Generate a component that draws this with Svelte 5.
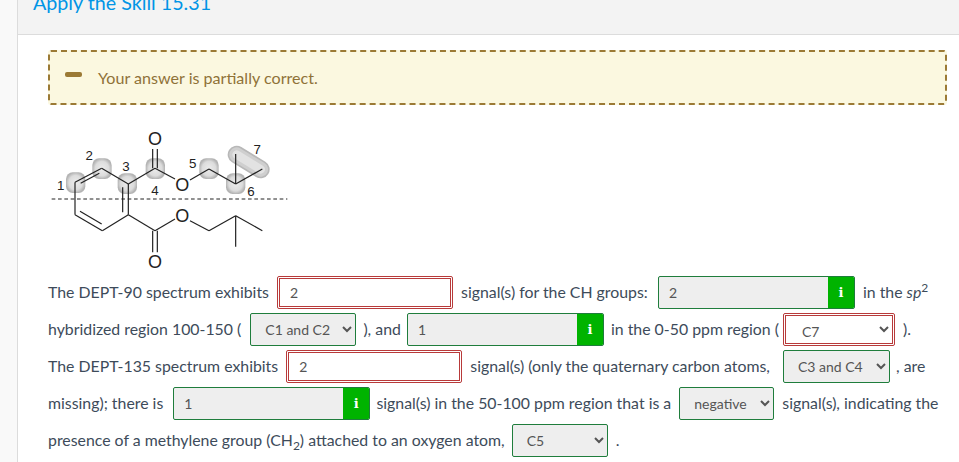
<script>
  const bonds = [
    [105,175,185,133],[185,133,265,180],[265,180,265,272],[265,272,187,320],[187,320,105,272],[105,272,105,175],
    [122,178,178,148],[248,190,248,265],[120,262,185,300],
    [265,180,345,133],[338,75,338,133],[352,75,352,133],[345,133,405,165],[450,168,507,135],[507,135,587,180],[587,180,667,135],[587,180,587,90],
    [265,272,345,320],[345,320,405,285],[450,290,507,320],[507,320,587,275],[587,275,667,320],[587,275,587,368],[338,320,338,385],[352,320,352,385]
  ];
  const blobs = [[78,145],[157,103],[233,148],[317,103],[478,103],[558,148]];
  const labels = [[62,197,'1'],[148,109,'2'],[258,142,'3'],[345,214,'4'],[458,131,'5'],[633,216,'6'],[652,89,'7']];
  const oxygens = [[345,45],[427,182],[427,275],[345,413]];
</script>

<div class="page">
  <main class="main">
    <header class="head"><h2 class="title">Apply the Skill 15.31</h2></header>
    <section class="body">
      <div class="alert"><span class="dash"></span><span>Your answer is partially correct.</span></div>

      <svg class="mol" viewBox="0 0 780 450" width="260" height="150" aria-label="Molecule">
        <defs>
          <radialGradient id="g"><stop offset="0" stop-color="#ececec"/><stop offset="0.7" stop-color="#dcdcdc"/><stop offset="1" stop-color="#b4b4b4"/></radialGradient>
        </defs>
        {#each blobs as b}<rect x={b[0]} y={b[1]} width="58" height="62" rx="20" fill="url(#g)"/>{/each}
        <g stroke-linecap="round">
          <line x1="590" y1="92" x2="662" y2="136" stroke="#b8b8b8" stroke-width="54"/>
          <line x1="590" y1="92" x2="662" y2="136" stroke="#cfcfcf" stroke-width="44"/>
          <line x1="590" y1="92" x2="662" y2="136" stroke="#e2e2e2" stroke-width="26"/>
        </g>
        <line x1="35" y1="225" x2="742" y2="225" stroke="#222" stroke-width="3" stroke-dasharray="11 8"/>
        {#each bonds as b}<line x1={b[0]} y1={b[1]} x2={b[2]} y2={b[3]} stroke="#222" stroke-width="3.6"/>{/each}
        {#each labels as l}<text x={l[0]} y={l[1]} class="num">{l[2]}</text>{/each}
        {#each oxygens as o}<text x={o[0]} y={o[1]+19} class="oxy">O</text>{/each}
      </svg>

      <div class="text first">
        The DEPT-90 spectrum exhibits
        <span class="bad inp"><input value="2" /></span>
        signal(s) for the CH groups:
        <span class="good group nudge-g1"><input value="2" /><b class="info">i</b></span>
        in the <i>sp</i><sup>2</sup>
        hybridized region 100-150 (
        <select class="good sel w106 nudge-c1"><option>C1 and C2</option></select>
        ), and
        <span class="good group nudge-g2"><input value="1" /><b class="info">i</b></span>
        in the 0-50 ppm region (
        <span class="bad badsel"><select><option>C7</option></select></span>
        ).
      </div>
      <div class="text">
        The DEPT-135 spectrum exhibits
        <span class="bad inp"><input value="2" /></span>
        signal(s) (only the quaternary carbon atoms,
        <select class="good sel w107 nudge-c3"><option>C3 and C4</option></select>
        , are
        missing); there is
        <span class="good group nudge-g3"><input value="1" /><b class="info">i</b></span>
        signal(s) in the 50-100 ppm region that is a
        <select class="good sel w95"><option>negative</option></select>
        signal(s), indicating the
        presence of a methylene group (CH<sub>2</sub>) attached to an oxygen atom,
        <select class="good sel w96 nudge-c5"><option>C5</option></select>
        .
      </div>
    </section>
  </main>
</div>

<style>
  :global(body) { margin: 0; background: #fff; overflow: hidden; }
  .page { height: 462px; overflow: hidden; padding-left: 17px; background: #f9f9f9; font-family: Lato, "Open Sans", sans-serif; box-sizing: border-box; }
  .main { height: 462px; border-left: 1px solid #dcdcdc; background: #fff; }
  .head { height: 34px; background: #f3f3f3; border-bottom: 1px solid #dcdcdc; overflow: hidden; }
  .title { margin: -11px 0 0 15px; font-size: 19.7px; font-weight: 400; line-height: 28px; color: #0095e6; }
  .body { padding: 15px 12px 0 30px; }
  .alert { display: flex; align-items: center; height: 55px; box-sizing: border-box; border: 2px dashed #9b7a35; border-radius: 3px; background: #fbf8e0; color: #8f7238; font-size: 16.1px; padding-left: 15px; }
  .dash { width: 17px; height: 5px; border-radius: 2px; background: #9b7a35; margin-right: 16px; position: relative; top: -3px; }
  .mol { display: block; margin: 19px 0 0 -8px; }
  .num { font: 40px "Liberation Sans", sans-serif; fill: #222; text-anchor: middle; }
  .oxy { font: 54px "Liberation Sans", sans-serif; fill: #222; text-anchor: middle; }
  .text { color: #3d4b5a; font-size: 15.85px; line-height: 34px; width: 900px; }
  .first { margin-top: 1px; }
  sup, sub { font-size: 12px; line-height: 0; }
  input, select { font-family: Lato, sans-serif; font-size: 14px; color: #555; box-sizing: border-box; }
  input { border: 0; outline: 0; background: transparent; padding: 0 10px; height: 100%; min-width: 0; }
  .good { border: 1px solid #1f7d3c; border-radius: 2px; background: #eee; }
  .sel { height: 33px; padding: 0 0 0 10px; vertical-align: middle; margin: 0 4px 3px; }
  .w106 { width: 106px; } .w107 { width: 107px; } .w95 { width: 95px; } .w96 { width: 96px; }
  .nudge-c1 { margin-left: 5px; margin-right: 3px; }
  .nudge-c3 { margin-left: 9px; margin-right: 2px; }
  .nudge-c5 { margin-left: 3px; }
  .group { display: inline-flex; width: 197px; height: 33px; box-sizing: border-box; vertical-align: middle; margin: 0 4px 3px; overflow: hidden; }
  .group input { flex: 1; width: 0; }
  .group.nudge-g1 { margin-left: 6px; }
  .group.nudge-g2 { margin-left: 2px; margin-right: 3px; }
  .group.nudge-g3 { margin-left: 6px; margin-right: 2px; }
  .info { width: 26px; background: #00b300; color: #fff; font: 700 13px/31px "DejaVu Serif", serif; text-align: center; }
  .bad { display: inline-block; box-sizing: border-box; border: 1px solid #b83a3a; padding: 1px; border-radius: 2px; vertical-align: middle; margin: 0 4px 3px; height: 33px; background: #fff; }
  .inp { width: 176px; }
  .inp input { display: block; width: 100%; border: 1px solid #b83a3a; background: #fff; }
  .badsel { width: 112px; margin-left: 0; }
  .badsel select { display: block; width: 100%; height: 100%; border: 1px solid #b83a3a; background: #fff; padding: 4px 0 0 12px; border-radius: 0; }
</style>
